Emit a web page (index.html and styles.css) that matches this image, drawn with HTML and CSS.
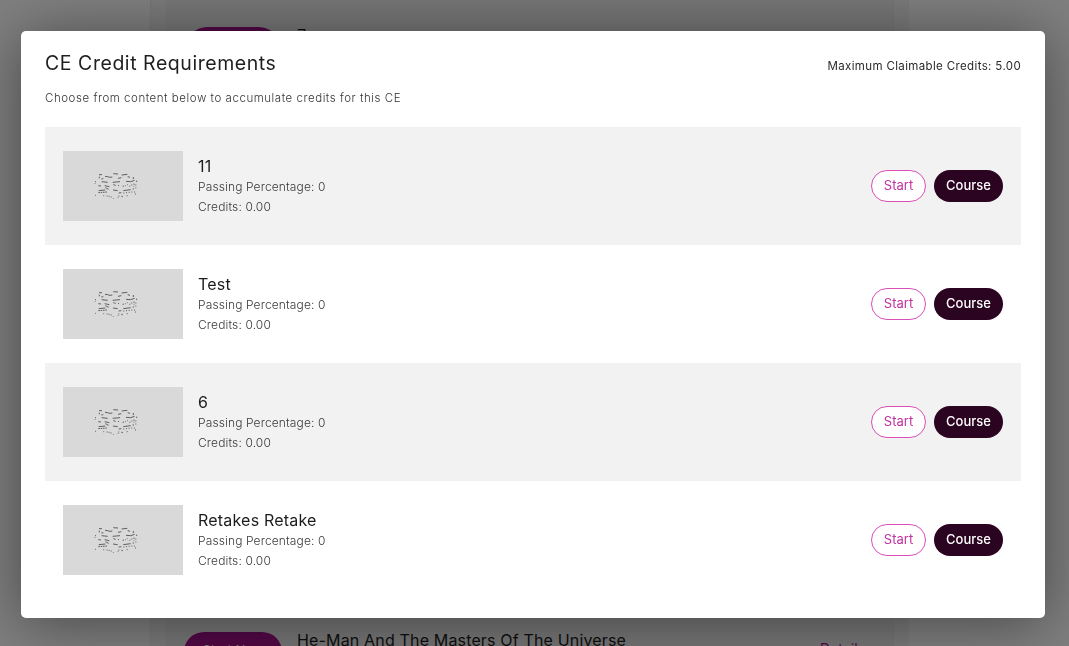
FILE: index.html
```html
<!DOCTYPE html>
<html lang="en">
<head>
<meta charset="utf-8">
<title>CE Credit Requirements</title>
<link rel="stylesheet" href="styles.css">
</head>
<body>
<div class="page">
  <aside class="side"></aside>
  <div class="gutter"></div>
  <main class="content">
    <div class="back-row back-top">
      <span class="back-btn"></span>
      <span class="back-title">7</span>
    </div>
    <div class="back-row back-bottom">
      <span class="back-btn">Start Now</span>
      <span class="back-title">He-Man And The Masters Of The Universe</span>
      <span class="back-link">Details</span>
    </div>
  </main>
  <div class="gutter"></div>
  <aside class="side"></aside>
</div>
<div class="overlay"></div>
<section class="modal">
  <header class="modal-head">
    <h1 class="modal-title">CE Credit Requirements</h1>
    <p class="modal-max">Maximum Claimable Credits: 5.00</p>
  </header>
  <p class="modal-sub">Choose from content below to accumulate credits for this CE</p>
  <div class="list">
    <article class="item item-alt">
      <div class="thumb"><svg class="thumb-icon" viewBox="0 0 132 84"><use href="#stack"/></svg></div>
      <div class="info">
        <h2 class="item-title">11</h2>
        <p class="meta">Passing Percentage: 0</p>
        <p class="meta">Credits: 0.00</p>
      </div>
      <div class="actions"><button class="btn btn-start">Start</button><button class="btn btn-course">Course</button></div>
    </article>
    <article class="item">
      <div class="thumb"><svg class="thumb-icon" viewBox="0 0 132 84"><use href="#stack"/></svg></div>
      <div class="info">
        <h2 class="item-title">Test</h2>
        <p class="meta">Passing Percentage: 0</p>
        <p class="meta">Credits: 0.00</p>
      </div>
      <div class="actions"><button class="btn btn-start">Start</button><button class="btn btn-course">Course</button></div>
    </article>
    <article class="item item-alt">
      <div class="thumb"><svg class="thumb-icon" viewBox="0 0 132 84"><use href="#stack"/></svg></div>
      <div class="info">
        <h2 class="item-title">6</h2>
        <p class="meta">Passing Percentage: 0</p>
        <p class="meta">Credits: 0.00</p>
      </div>
      <div class="actions"><button class="btn btn-start">Start</button><button class="btn btn-course">Course</button></div>
    </article>
    <article class="item">
      <div class="thumb"><svg class="thumb-icon" viewBox="0 0 132 84"><use href="#stack"/></svg></div>
      <div class="info">
        <h2 class="item-title">Retakes Retake</h2>
        <p class="meta">Passing Percentage: 0</p>
        <p class="meta">Credits: 0.00</p>
      </div>
      <div class="actions"><button class="btn btn-start">Start</button><button class="btn btn-course">Course</button></div>
    </article>
  </div>
</section>
<svg class="defs" width="0" height="0" aria-hidden="true">
  <symbol id="stack" viewBox="0 0 132 84">
    <g fill="none" stroke="#333" stroke-width="2.2">
      <path d="M15 8h9M16 14v5M58 5l14 1M83 9l17-2M33 13l8 1 6 2 8-1M101 14l7 2M22 21l6-1M72 19l10-2M118 15v6"/>
      <path d="M3 28l3 2M3 34v2M23 29l18 2M56 31l22-2M96 28l14 1 12-4M58 38l7 2M72 41l3-1M118 36l4 1M128 26v4"/>
      <path d="M13 41l8 1M32 41l14 3M86 43l4-1M94 41h2M100 38h2M106 43l3-1M112 39h3M119 43h2M124 39h3"/>
      <path d="M34 47l4 2 6 3M14 56l20-2M57 54l14 2M88 56l22-3M116 51h4M124 48h3"/>
      <path d="M13 62l26-2" stroke-dasharray="5 2"/>
      <path d="M74 63l8-1M88 63h3M96 62h3M104 61h3M112 60h3M120 60h3"/>
      <path d="M3 70h2.500M28 71h2.500M38 72h3M44 73h3M50 75h3M73 72h3M82 73h3M98 71h3M123 66h3"/>
      <path d="M58 78v2M72 76v2M85 74h2"/>
    </g>
  </symbol>
</svg>
</body>
</html>
```
FILE: styles.css
```css
* { box-sizing: border-box; }
html, body { margin: 0; height: 646px; overflow: hidden; }
body { font-family: Inter, "Liberation Sans", sans-serif; background: #fff; color: #1c1c1c; }

.page { display: flex; height: 646px; background: #fff; }
.side { flex: 1; }
.side:first-child { flex: 0 0 150px; }
.gutter { flex: 0 0 16px; background: #f5f5f5; border-left: 1px solid #ececec; }
.content { flex: 0 0 727px; background: #eeeeee; display: flex; flex-direction: column; justify-content: space-between; padding: 27px 18px 0; }
.back-row { display: flex; gap: 15px; align-items: flex-start; height: 32px; }
.back-top { gap: 18px; }
.back-bottom { margin-bottom: -18px; }
.back-btn { flex: 0 0 98px; height: 40px; border-radius: 20px; background: #a5118c; color: #fff; font-size: 13px; text-align: center; padding-top: 10px; }
.back-top .back-btn { margin-left: 3px; flex-basis: 92px; }
.back-title { font-size: 16px; flex: 1; margin-top: -2px; letter-spacing: .16px; }
.back-link { color: #a5118c; font-size: 14px; margin-right: 10px; margin-top: 8px; }

.overlay { position: fixed; inset: 0; background: rgba(0, 0, 0, .5); }

.modal { position: fixed; left: 21px; top: 31px; width: 1024px; height: 587px; background: #fff; border-radius: 5px; padding: 20px 24px; box-shadow: 0 5px 60px rgba(0, 0, 0, .45); }
.modal-head { display: flex; justify-content: space-between; align-items: flex-end; height: 24px; }
.modal-title { margin: 0; font-size: 19.5px; font-weight: 400; line-height: 24px; letter-spacing: .55px; color: #1f1f1f; }
.modal-max { margin: 0 0 1px; font-size: 11.5px; line-height: 15px; letter-spacing: .36px; color: #2a2a2a; }
.modal-sub { margin: 15px 0 0; font-size: 11.5px; line-height: 16px; font-weight: 300; letter-spacing: .54px; color: #333; }
.list { margin-top: 21px; display: flex; flex-direction: column; }

.item { height: 118px; padding: 0 18px; display: flex; align-items: center; }
.item-alt { background: #f2f2f2; }
.thumb { flex: 0 0 120px; height: 70px; background: #d9d9d9; display: flex; align-items: center; justify-content: center; }
.thumb-icon { width: 44px; height: 28px; margin-right: 14px; }
.info { flex: 1; margin-left: 15px; }
.item-title { margin: 1px 0; font-size: 16px; font-weight: 400; line-height: 20px; letter-spacing: .2px; color: #1c1c1c; }
.meta { margin: 0; font-size: 12px; font-weight: 300; line-height: 20px; letter-spacing: .13px; color: #3a3a3a; }
.actions { display: flex; gap: 8px; }
.btn { height: 32px; border-radius: 16px; font-family: inherit; font-size: 13px; padding: 0 0 2px; cursor: pointer; }
.btn-start { width: 55px; background: #fff; border: 1px solid #d94fb8; color: #c0329f; font-weight: 400; }
.btn-course { width: 69px; background: #2b0421; border: 0; color: #fff; font-weight: 500; }
.defs { position: absolute; }
```
